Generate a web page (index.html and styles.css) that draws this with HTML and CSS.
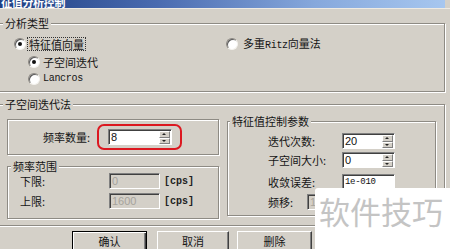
FILE: index.html
```html
<!DOCTYPE html>
<html lang="zh">
<head>
<meta charset="utf-8">
<title>特征值分析控制</title>
<link rel="stylesheet" href="styles.css">
</head>
<body>
<div class="win">
  <div class="titlebar"><span class="title">征值分析控制</span><span class="tbtn"></span></div>

  <div class="group g1">
    <div class="legend">分析类型</div>
    <div class="row1">
      <div class="opt"><span class="radio on"></span><span class="focus">特征值向量</span></div>
      <div class="opt o2"><span class="radio"></span><span>多重<span class="mono">Ritz</span>向量法</span></div>
    </div>
    <div class="sub">
      <div class="opt"><span class="radio on"></span><span>子空间迭代</span></div>
      <div class="opt"><span class="radio"></span><span class="mono">Lancros</span></div>
    </div>
  </div>

  <div class="group g2">
    <div class="legend">子空间迭代法</div>
    <div class="cols">
      <div class="left">
        <div class="box count">
          <span class="lbl">频率数量:</span>
          <div class="mark">
            <div class="field spin w64"><span class="val">8</span><span class="spinbtns"><i class="up"></i><i class="dn"></i></span></div>
          </div>
        </div>
        <div class="group range">
          <div class="legend">频率范围</div>
          <div class="frow"><span class="lbl">下限:</span><div class="field dis w51"><span class="val">0</span></div><span class="unit">[cps]</span></div>
          <div class="frow"><span class="lbl">上限:</span><div class="field dis w51"><span class="val">1600</span></div><span class="unit">[cps]</span></div>
        </div>
      </div>
      <div class="group params">
        <div class="legend">特征值控制参数</div>
        <div class="prow r1"><span class="lbl">迭代次数:</span><div class="field spin w53"><span class="val">20</span><span class="spinbtns"><i class="up"></i><i class="dn"></i></span></div></div>
        <div class="prow r2"><span class="lbl">子空间大小:</span><div class="field spin w53"><span class="val">0</span><span class="spinbtns"><i class="up"></i><i class="dn"></i></span></div></div>
        <div class="prow r3"><span class="lbl">收敛误差:</span><div class="field w53"><span class="val mono">1e-010</span></div></div>
        <div class="prow r4"><span class="lbl short">频移:</span><div class="field dis w53"><span class="val">1</span></div></div>
      </div>
    </div>
  </div>

  <div class="buttons">
    <div class="btn def">确认</div>
    <div class="btn b2">取消</div>
    <div class="btn b3">删除</div>
  </div>

  <div class="watermark">软件技巧</div>
</div>
</body>
</html>
```

FILE: styles.css
```css
html, body {
  margin: 0;
  padding: 0;
}
body {
  width: 450px;
  height: 249px;
  overflow: hidden;
  background: #d4d0c8;
  font-family: "Noto Sans CJK SC", "Noto Sans", sans-serif;
  font-size: 11px;
  color: #151515;
}
.win {
  position: relative;
  display: flex;
  flex-direction: column;
  height: 249px;
  overflow: hidden;
}
.titlebar {
  height: 8px;
  flex: none;
  display: flex;
  justify-content: space-between;
  overflow: hidden;
  background: linear-gradient(90deg, #1e3f82 0%, #4a6bb0 35%, #86a8dc 70%, #a8c8f0 100%);
  border-bottom: 1px solid #eeeae2;
}
.title {
  color: #fff;
  font-weight: bold;
  font-size: 11px;
  line-height: 12px;
  margin-top: -4px;
  padding-left: 1px;
  letter-spacing: -0.3px;
}
.tbtn {
  width: 5px;
  height: 8px;
  background: #d4d0c8;
}
.group {
  box-sizing: border-box;
  border: 1px solid #8e8b84;
  box-shadow: inset 1px 1px 0 #fff, 1px 1px 0 #fff;
}
.legend {
  width: fit-content;
  height: 12px;
  line-height: 12px;
  padding: 0 2px;
  background: #d4d0c8;
  margin: -7px 0 0 4px;
}
.g1 {
  margin: 14px 0 0 -2px;
  width: 447px;
  padding-bottom: 5px;
}
.row1 {
  display: grid;
  grid-template-columns: 212px auto;
  padding-left: 15px;
  margin-top: 8px;
  height: 14px;
  align-items: center;
}
.opt {
  display: flex;
  align-items: center;
  gap: 3px;
  height: 14px;
  line-height: 12px;
}
.o2 > span:last-child {
  margin-left: 2px;
}
.radio {
  flex: none;
  box-sizing: border-box;
  width: 12px;
  height: 12px;
  border-radius: 50%;
  background: #fff;
  border: 1px solid;
  border-color: #8a8680 #f4f2ee #f4f2ee #8a8680;
  box-shadow: inset 1px 1px 0 #5a5a5a;
  position: relative;
}
.radio.on::after {
  content: "";
  position: absolute;
  left: 3px;
  top: 3px;
  width: 4px;
  height: 4px;
  border-radius: 50%;
  background: #111;
}
.focus {
  border: 1px dotted #333;
  padding: 0 1px;
  margin-left: -2px;
  line-height: 12px;
}
.mono {
  font-family: "Liberation Mono", monospace;
  font-size: 10px;
  letter-spacing: -0.3px;
}
.sub {
  padding-left: 29px;
  margin-top: 3px;
  display: flex;
  flex-direction: column;
  gap: 2px;
}
.sub .opt {
  height: 15px;
}
.g2 {
  margin: 12px 0 0 -2px;
  width: 447px;
  padding-bottom: 6px;
}
.legend + .cols {
  margin-top: 9px;
}
.cols {
  display: flex;
  align-items: flex-start;
  gap: 8px;
  padding-left: 8px;
}
.left {
  width: 212px;
  display: flex;
  flex-direction: column;
}
.box {
  box-sizing: border-box;
  border: 1px solid #8e8b84;
  box-shadow: inset 1px 1px 0 #fff, 1px 1px 0 #fff;
}
.count {
  display: flex;
  align-items: center;
  padding: 4px 0 4px 35px;
}
.lbl {
  flex: none;
  width: 54px;
  line-height: 12px;
}
.mark {
  border: 2px solid #dc1820;
  border-radius: 7px;
  padding: 3px 8px 3px 9px;
}
.field {
  box-sizing: border-box;
  height: 16px;
  background: #fff;
  border: 1px solid;
  border-color: #808080 #fff #fff #808080;
  box-shadow: inset 1px 1px 0 #404040;
  display: flex;
  justify-content: space-between;
  align-items: stretch;
  font-family: "Liberation Sans", Arial, sans-serif;
  font-size: 11px;
  color: #111;
}
.field .val {
  padding: 1px 0 0 2px;
  line-height: 13px;
}
.field .val.mono {
  font-size: 9px;
}
.field.dis {
  background: #d4d0c8;
  color: #a6a39c;
}
.w64 { width: 64px; }
.w51 { width: 51px; }
.w53 { width: 53px; }
.spinbtns {
  width: 11px;
  display: flex;
  flex-direction: column;
  padding: 1px 1px 0 0;
}
.spinbtns i {
  flex: 1;
  box-sizing: border-box;
  background: #d4d0c8;
  border: 1px solid;
  border-color: #fff #808080 #808080 #fff;
  position: relative;
}
.spinbtns i::after {
  content: "";
  position: absolute;
  left: 2px;
  top: 1px;
  border-left: 2px solid transparent;
  border-right: 2px solid transparent;
}
.spinbtns .up::after {
  border-bottom: 2px solid #222;
}
.spinbtns .dn::after {
  border-top: 2px solid #222;
}
.range {
  margin-top: 11px;
  padding-bottom: 9px;
}
.range .legend {
  margin-left: 3px;
}
.frow {
  display: flex;
  align-items: center;
  padding-left: 12px;
  height: 16px;
  margin-top: 4px;
}
.range .legend + .frow {
  margin-top: 1px;
}
.frow .lbl {
  width: 89px;
}
.unit {
  margin-left: 4px;
  font-family: "Liberation Mono", monospace;
  font-size: 10px;
  font-weight: bold;
  color: #222;
}
.params {
  width: 209px;
  margin-top: 2px;
  padding-bottom: 5px;
}
.params .legend {
  margin-left: 2px;
}
.prow {
  display: flex;
  align-items: center;
  padding-left: 40px;
  height: 16px;
}
.prow .lbl {
  width: 74px;
}
.prow .lbl.short {
  width: 39px;
}
.r1 { margin-top: 6px; }
.r2 { margin-top: 3px; }
.r3 { margin-top: 6px; }
.r4 { margin-top: 4px; }
.buttons {
  display: flex;
  padding-left: 72px;
  margin-top: 5px;
}
.btn {
  box-sizing: border-box;
  width: 75px;
  height: 23px;
  flex: none;
  background: #d4d0c8;
  border: 1px solid;
  border-color: #fff #404040 #404040 #fff;
  box-shadow: inset -1px -1px 0 #808080;
  text-align: center;
  line-height: 12px;
  padding-top: 3px;
}
.btn.def {
  border: 1px solid #000;
  box-shadow: inset 1px 1px 0 #fff, inset -1px -1px 0 #404040, inset -2px -2px 0 #808080;
}
.b2 {
  width: 72px;
  margin-left: 10px;
}
.b3 {
  margin-left: 8px;
}
.watermark {
  position: absolute;
  left: 315px;
  top: 188px;
  right: 0;
  bottom: 0;
  background: #fff;
  border-top-left-radius: 3px;
  color: #c4c4c4;
  font-family: "Noto Sans CJK SC", sans-serif;
  font-size: 31px;
  line-height: 31px;
  padding: 7px 0 0 4px;
  white-space: nowrap;
}
```
